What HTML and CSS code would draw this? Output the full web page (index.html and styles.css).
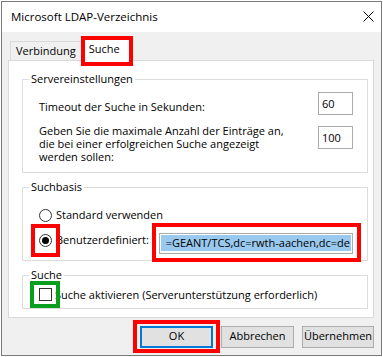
FILE: index.html
```html
<!DOCTYPE html>
<html lang="de">
<head>
<meta charset="utf-8">
<title>Microsoft LDAP-Verzeichnis</title>
<link rel="stylesheet" href="styles.css">
</head>
<body>
<div class="window">
  <div class="titlebar">
    <span class="title">Microsoft LDAP-Verzeichnis</span>
    <svg class="close" width="11" height="11" viewBox="0 0 11 11"><path d="M0.5 0.5 L10.5 10.5 M10.5 0.5 L0.5 10.5" stroke="#000" stroke-width="1" fill="none"/></svg>
  </div>
  <div class="client">
    <div class="tabs">
      <div class="tab">Verbindung</div>
      <div class="tab selected">Suche<span class="hl red hl-tab"></span></div>
    </div>
    <div class="panel">
      <div class="group g1">
        <div class="gtitle">Servereinstellungen</div>
        <div class="row r1">
          <div class="label l1">Timeout der Suche in Sekunden:</div>
          <div class="edit">60</div>
        </div>
        <div class="row r2">
          <div class="label">Geben Sie die maximale Anzahl der Einträge an,<br>die bei einer erfolgreichen Suche angezeigt<br>werden sollen:</div>
          <div class="edit e2">100</div>
        </div>
      </div>
      <div class="group g2">
        <div class="gtitle">Suchbasis</div>
        <div class="opt o1">
          <span class="radio"></span>
          <span class="olabel">Standard verwenden</span>
        </div>
        <div class="opt o2">
          <span class="radio checked"><span class="dot"></span><span class="hl red hl-radio"></span></span>
          <span class="olabel">Benutzerdefiniert:</span>
          <div class="basefield">
            <div class="basetext"><span class="sel">=GEANT/TCS,dc=rwth-aachen,dc=de</span></div>
            <span class="hl red hl-field"></span>
          </div>
        </div>
      </div>
      <div class="group g3">
        <div class="gtitle">Suche</div>
        <div class="opt o3">
          <span class="check"><span class="hl green hl-check"></span></span>
          <span class="olabel cl">Suche aktivieren (Serverunterstützung erforderlich)</span>
        </div>
      </div>
    </div>
    <div class="buttons">
      <div class="btn default">OK<span class="hl red hl-ok"></span></div>
      <div class="btn">Abbrechen</div>
      <div class="btn narrow">Übernehmen</div>
    </div>
  </div>
</div>
</body>
</html>
```
FILE: styles.css
```css
* { box-sizing: border-box; }
html, body { margin: 0; padding: 0; background: #fff; }
body {
  padding: 1px 0 0 1px;
  font-family: "Open Sans", "Noto Sans", sans-serif;
  font-size: 11px;
  color: #000;
}
.window {
  width: 381px;
  height: 355px;
  border: 1px solid #7a7a7a;
  background: #f0f0f0;
  display: flex;
  flex-direction: column;
}
.titlebar {
  height: 30px;
  background: #fff;
  display: flex;
  align-items: center;
  justify-content: space-between;
  padding: 0 7px 0 9px;
}
.title { line-height: 30px; font-size: 11.5px; }
.close { display: block; margin-top: -1px; }
.client {
  flex: 1;
  padding: 7px 7px 7px 6px;
  display: flex;
  flex-direction: column;
}
.tabs {
  height: 21px;
  display: flex;
  align-items: flex-end;
  padding-left: 2px;
  position: relative;
  z-index: 1;
}
.tab {
  height: 19px;
  line-height: 17px;
  padding: 0 5px;
  border: 1px solid #d9d9d9;
  border-bottom: none;
  background: #f0f0f0;
  position: relative;
}
.tab.selected {
  height: 22px;
  width: 50px;
  margin-left: -1px;
  margin-bottom: -1px;
  padding: 0 0 0 7px;
  background: #fff;
}
.hl { position: absolute; border: 4px solid #f00; pointer-events: none; }
.hl.green { border-color: #0a9e1e; }
.hl-tab { left: -1px; right: -3px; top: -4px; bottom: -5px; }
.panel {
  height: 258px;
  border: 1px solid #d9d9d9;
  background: #fff;
  padding: 0 5px 8px 13px;
  display: flex;
  flex-direction: column;
}
.group {
  border: 1px solid #dcdcdc;
  display: flex;
  flex-direction: column;
  padding: 0 14px 0 16px;
}
.g1 { margin-top: 18px; padding-bottom: 9px; }
.g2 { margin-top: 14px; padding-bottom: 6px; }
.g3 { margin-top: 14px; padding-bottom: 7px; }
.gtitle {
  align-self: flex-start;
  margin: -8px 0 0 -10px;
  padding: 0 2px;
  background: #fff;
  line-height: 14px;
}
.row { display: flex; justify-content: space-between; align-items: flex-start; }
.r1 { margin-top: 6px; }
.r2 { margin-top: 9px; }
.label { line-height: 13px; }
.l1 { margin-top: 8px; }
.edit {
  width: 35px;
  height: 23px;
  border: 1px solid #ababab;
  background: #fff;
  padding: 4px 3px 0;
  line-height: 13px;
}
.e2 { margin-top: 2px; }
.opt { display: flex; align-items: flex-start; }
.o1 { margin-top: 15px; }
.o2 { margin-top: 11px; }
.o3 { margin-top: 6px; }
.olabel { line-height: 13px; margin-left: 4px; white-space: nowrap; }
.o1 .olabel { margin-top: -1px; }
.cl { margin-left: 3px; }
.radio {
  width: 13px;
  height: 13px;
  border: 1px solid #333;
  border-radius: 50%;
  background: #fff;
  position: relative;
  flex: none;
  display: flex;
  align-items: center;
  justify-content: center;
}
.o2 .radio { margin-top: 1px; }
.dot { width: 7px; height: 7px; border-radius: 50%; background: #000; }
.hl-radio { left: -9px; right: -9px; top: -11px; bottom: -11px; border-radius: 0; }
.check {
  width: 13px;
  height: 13px;
  border: 1px solid #333;
  background: #fff;
  position: relative;
  flex: none;
}
.hl-check { left: -10px; right: -9px; top: -8px; bottom: -8px; }
.basefield {
  margin-left: auto;
  width: 194px;
  height: 21px;
  border: 1px solid #ababab;
  background: #fff;
  padding: 1px;
  position: relative;
}
.basetext {
  height: 16px;
  background: #99c9ef;
  overflow: hidden;
  display: flex;
  justify-content: flex-end;
}
.sel { flex: none; line-height: 16px; white-space: nowrap; padding-right: 1px; }
.hl-field { left: -8px; right: -9px; top: -11px; bottom: -9px; }
.buttons {
  margin-top: 8px;
  height: 22px;
  display: flex;
  justify-content: flex-end;
  gap: 8px;
}
.btn {
  width: 73px;
  height: 22px;
  border: 1px solid #adadad;
  background: #e1e1e1;
  text-align: center;
  line-height: 18px;
  position: relative;
}
.btn.narrow { width: 72px; }
.btn.default { border: 2px solid #0078d7; line-height: 16px; }
.hl-ok { left: -9px; right: -9px; top: -8px; bottom: -7px; }
```
